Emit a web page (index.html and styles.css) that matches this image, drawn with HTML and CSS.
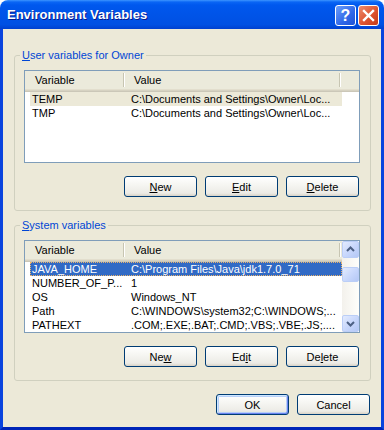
FILE: index.html
```html
<!DOCTYPE html>
<html lang="en">
<head>
    <meta charset="UTF-8">
    <title>Environment Variables</title>
    <link rel="stylesheet" href="styles.css">
</head>
<body>
  <div class="window">
    <div class="titlebar">
      <span class="title">Environment Variables</span>
      <div class="caption-buttons">
        <span class="cap-btn help">?</span>
        <span class="cap-btn close">
          <svg width="19" height="19" viewBox="0 0 19 19">
            <path d="M5 5 L14 14 M14 5 L5 14" stroke="#fff" stroke-width="2.4" stroke-linecap="square" fill="none"/>
          </svg>
        </span>
      </div>
    </div>

    <div class="client">
      <fieldset class="group">
        <legend><u>U</u>ser variables for Owner</legend>
        <div class="list">
          <div class="list-main">
            <div class="list-head">
              <span class="hcell var">Variable</span>
              <span class="hsep"></span>
              <span class="hcell val">Value</span>
              <span class="hsep"></span>
            </div>
            <div class="row inactive">
              <span class="cell var">TEMP</span>
              <span class="cell val">C:\Documents and Settings\Owner\Loc...</span>
            </div>
            <div class="row">
              <span class="cell var">TMP</span>
              <span class="cell val">C:\Documents and Settings\Owner\Loc...</span>
            </div>
          </div>
        </div>
        <div class="btn-row">
          <button class="btn"><u>N</u>ew</button>
          <button class="btn"><u>E</u>dit</button>
          <button class="btn"><u>D</u>elete</button>
        </div>
      </fieldset>

      <fieldset class="group">
        <legend><u>S</u>ystem variables</legend>
        <div class="list">
          <div class="list-main">
            <div class="list-head">
              <span class="hcell var">Variable</span>
              <span class="hsep"></span>
              <span class="hcell val">Value</span>
              <span class="hsep"></span>
            </div>
            <div class="row selected">
              <span class="cell var">JAVA_HOME</span>
              <span class="cell val">C:\Program Files\Java\jdk1.7.0_71</span>
            </div>
            <div class="row">
              <span class="cell var">NUMBER_OF_P...</span>
              <span class="cell val">1</span>
            </div>
            <div class="row">
              <span class="cell var">OS</span>
              <span class="cell val">Windows_NT</span>
            </div>
            <div class="row">
              <span class="cell var">Path</span>
              <span class="cell val">C:\WINDOWS\system32;C:\WINDOWS;...</span>
            </div>
            <div class="row">
              <span class="cell var">PATHEXT</span>
              <span class="cell val">.COM;.EXE;.BAT;.CMD;.VBS;.VBE;.JS;....</span>
            </div>
          </div>
          <div class="scrollbar">
            <span class="sb-btn">
              <svg width="15" height="15" viewBox="0 0 15 15"><path d="M4 9 L7.5 5.5 L11 9" stroke="#4D6185" stroke-width="2" fill="none"/></svg>
            </span>
            <span class="sb-thumb"></span>
            <span class="sb-btn down">
              <svg width="15" height="15" viewBox="0 0 15 15"><path d="M4 6 L7.5 9.5 L11 6" stroke="#4D6185" stroke-width="2" fill="none"/></svg>
            </span>
          </div>
        </div>
        <div class="btn-row">
          <button class="btn">Ne<u>w</u></button>
          <button class="btn">Ed<u>i</u>t</button>
          <button class="btn">De<u>l</u>ete</button>
        </div>
      </fieldset>

      <div class="footer">
        <button class="btn default">OK</button>
        <button class="btn">Cancel</button>
      </div>
    </div>
  </div>
</body>
</html>
```

FILE: styles.css
```css
body {
  margin: 0;
  background: #fff;
  font-family: "Liberation Sans", Arial, sans-serif;
  font-size: 11px;
  color: #000;
}

.window {
  width: 384px;
  height: 430px;
  display: flex;
  flex-direction: column;
  border-radius: 8px 8px 0 0;
  overflow: hidden;
}

/* title bar */
.titlebar {
  height: 29px;
  flex: none;
  display: flex;
  align-items: center;
  padding: 0 5px 0 7px;
  background: linear-gradient(to bottom,
    #3D95FF 0px, #0A66F5 2px, #0058EE 5px, #0054E8 50%, #0050E3 85%, #0040CF 100%);
}

.title {
  flex: 1;
  color: #fff;
  font-weight: bold;
  font-size: 13px;
  text-shadow: 1px 1px #0A1A8A;
}

.caption-buttons {
  display: flex;
  gap: 2px;
  margin-top: 2px;
}

.cap-btn {
  width: 21px;
  height: 21px;
  box-sizing: border-box;
  border: 1px solid #fff;
  border-radius: 3px;
  display: flex;
  align-items: center;
  justify-content: center;
}

.help {
  background: linear-gradient(135deg, #6C9EFA 0%, #2F67E8 60%, #1F52D6 100%);
  color: #fff;
  font-weight: bold;
  font-size: 16px;
}

.close {
  background: linear-gradient(135deg, #EE8C6E 0%, #DD5431 55%, #C23A17 100%);
}

/* client area */
.client {
  flex: 1;
  background: #ECE9D8;
  border: 3px solid #0A44DE;
  border-top: 0;
  border-bottom-color: #0025B8;
  padding: 20px 10px 0 11px;
}

.group {
  margin: 0;
  padding: 0 10px 13px 9px;
  border: 1px solid #D0D0BF;
  border-radius: 3px;
  min-width: 0;
}

.group + .group {
  margin-top: 8px;
}

.group legend {
  margin-left: -4px;
  padding: 0 2px;
  line-height: 13px;
  color: #0046D5;
}

/* list views */
.list {
  margin-top: 8px;
  height: 93px;
  box-sizing: border-box;
  border: 1px solid #7F9DB9;
  background: #fff;
  display: flex;
  overflow: hidden;
}

.list-main {
  flex: 1;
  min-width: 0;
}

.list-head {
  display: flex;
  align-items: center;
  height: 21px;
  box-sizing: border-box;
  padding-bottom: 3px;
  background: linear-gradient(to bottom,
    #EBEADB 0, #EBEADB 18px, #E2DECD 18px, #E2DECD 19px,
    #D6D2C2 19px, #D6D2C2 20px, #CBC7B8 20px);
}

.hcell {
  white-space: nowrap;
}

.hcell.var {
  width: 88px;
  padding-left: 10px;
}

.hcell.val {
  width: 205px;
  padding-left: 9px;
}

.hsep {
  width: 1px;
  height: 14px;
  background: #C7C5B2;
  border-right: 1px solid #fff;
}

.row {
  display: flex;
  height: 14px;
  line-height: 14px;
  margin-left: 5px;
  width: 312px;
  box-sizing: border-box;
  white-space: nowrap;
}

.cell {
  overflow: hidden;
}

.cell.var {
  width: 93px;
  padding-left: 2px;
}

.cell.val {
  flex: 1;
  padding-left: 6px;
}

.row.inactive {
  background: #ECE9D8;
}

.row.selected {
  background: #316AC5;
  color: #fff;
  outline: 1px dotted #E9B36B;
  outline-offset: -1px;
}

/* scrollbar */
.scrollbar {
  width: 17px;
  flex: none;
  display: flex;
  flex-direction: column;
  background: linear-gradient(to right, #F3F1EC, #FEFEFB);
}

.sb-btn,
.sb-thumb {
  box-sizing: border-box;
  border: 1px solid #BBCEF7;
  border-radius: 2px;
  background: linear-gradient(135deg, #E3EBFE 0%, #C9D8FC 50%, #B4C8F6 100%);
  display: flex;
  align-items: center;
  justify-content: center;
}

.sb-btn {
  height: 17px;
}

.sb-thumb {
  height: 15px;
  margin-top: 9px;
}

.sb-btn.down {
  margin-top: auto;
}

/* push buttons */
.btn-row,
.footer {
  display: flex;
  justify-content: flex-end;
  gap: 8px;
  padding-right: 1px;
}

.btn-row {
  margin-top: 13px;
}

.footer {
  margin-top: 13px;
}

.btn {
  width: 73px;
  height: 21px;
  box-sizing: border-box;
  padding: 0;
  border: 1px solid #003C74;
  border-radius: 3px;
  background: linear-gradient(to bottom, #FFFFFF 0%, #F6F6F2 40%, #ECEBE6 85%, #D8D2C6 100%);
  font: inherit;
  color: #000;
}

.btn.default {
  box-shadow: inset 1px 1px #CEE7FF, inset -1px -1px #6982EE, inset 0 0 0 2px #B7CFF8;
}
```
